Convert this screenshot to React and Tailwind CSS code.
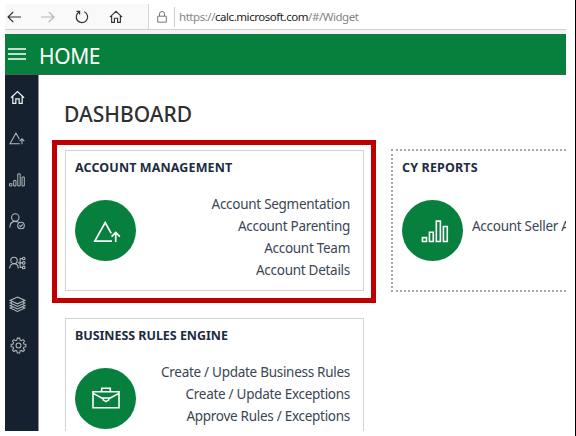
import React from "react";

const svgBase = { fill: "none", stroke: "currentColor", strokeLinejoin: "miter" };

function HomeIcon({ className }) {
  return (
    <svg viewBox="0 0 16 16" className={className} {...svgBase} strokeWidth="1.3">
      <path d="M1 8.2 8 1.6l7 6.6M3 6.8v7.4h3.2V9.4h3.6v4.8H13V6.8" />
    </svg>
  );
}

function TriangleIcon({ className, weight }) {
  return (
    <svg viewBox="0 0 28 22" className={className} {...svgBase} strokeWidth={weight}>
      <path d="M19 20.2H1.8L12.2 1.5l6 10.8M22.7 21v-9.2M18.6 15.6l4.1-4.1 4.1 4.1" />
    </svg>
  );
}

function BarsIcon({ className, weight }) {
  return (
    <svg viewBox="0 0 28 24" className={className} {...svgBase} strokeWidth={weight}>
      <path d="M.9 18.4h4.2v4H.9zM8.2 12.8h4v9.6h-4zM15.4 1.2h4.2v21.2h-4.2zM22.8 6.8h4v15.6h-4z" />
    </svg>
  );
}

function BriefcaseIcon({ className }) {
  return (
    <svg viewBox="0 0 28 22" className={className} {...svgBase} strokeWidth="1.6">
      <path d="M1 4.8h26v15.9H1zM9.7 4.8V1.2h8.6v3.6M1.2 6.4l10 5.4M26.8 6.4l-10 5.4M11.2 11h5.6v1.8L14 14.6l-2.8-1.8z" />
    </svg>
  );
}

function UserCheckIcon({ className }) {
  return (
    <svg viewBox="0 0 17 17" className={className} {...svgBase} strokeWidth="1.1">
      <circle cx="6.3" cy="4.5" r="3.7" />
      <path d="M.8 14.5c0-3.8 2.2-6.1 5.5-6.1 1.3 0 2.3.3 3.2.9" />
      <circle cx="12" cy="12.5" r="3.3" />
      <path d="m10.4 12.5 1.2 1.2 2.1-2.4" />
    </svg>
  );
}

function UserGroupIcon({ className }) {
  return (
    <svg viewBox="0 0 17 14" className={className} {...svgBase} strokeWidth="1.1">
      <circle cx="5" cy="4.4" r="3.2" />
      <path d="M.7 12.6C.7 9.5 2.4 7.6 5 7.6s4.3 1.9 4.3 5M9 6.9h3M11.1 2.6v8.8M11.1 2.6h2M11.1 11.4h2M12 6.9h1" />
      <circle cx="14.7" cy="2.5" r="1.3" />
      <circle cx="14.7" cy="6.9" r="1.3" />
      <circle cx="14.7" cy="11.4" r="1.3" />
    </svg>
  );
}

function LayersIcon({ className }) {
  return (
    <svg viewBox="0 0 17 16" className={className} {...svgBase} strokeWidth="1.1">
      <path d="m8.5 1 7.4 3.4-7.4 3.4-7.4-3.4zM3 6.1l-1.9.9 7.4 3.4L15.9 7 14 6.1M3 8.7l-1.9.9L8.5 13l7.4-3.4-1.9-.9M3 11.1l-1.9.9 7.4 3.4 7.4-3.4-1.9-.9" />
    </svg>
  );
}

function GearIcon({ className }) {
  return (
    <svg viewBox="0 0 18 18" className={className} {...svgBase} strokeWidth="1.1">
      <path d="M7.7 1.2h2.6l.4 2.1 1.3.6 1.9-1.2 1.5 1.5-1.2 1.9.5 1.3 2.1.4v2.5l-2.1.4-.5 1.3 1.2 1.9-1.5 1.5-1.9-1.2-1.3.6-.4 2.1H7.7l-.4-2.1-1.3-.6-1.9 1.2-1.5-1.5L3.8 12l-.5-1.3-2.1-.4V7.8l2.1-.4.5-1.3-1.2-1.9 1.5-1.5L6 3.9l1.3-.6z" />
      <circle cx="9" cy="9" r="2.6" />
    </svg>
  );
}

function BrowserBar() {
  return (
    <div className="flex h-[30px] shrink-0 flex-col bg-[#f2f2f2]">
      <div className="flex h-[26px] items-stretch border-b border-[#cfcfcf] bg-white text-[#333]">
        <div className="flex w-[143px] items-center bg-[#f9f9f9] pl-0.5">
          <svg viewBox="0 0 14 12" className="h-3 w-3.5" {...svgBase} strokeWidth="1.1">
            <path d="M14 6H1M6.2 1 1 6l5.2 5" />
          </svg>
          <svg viewBox="0 0 14 12" className="ml-5 h-3 w-3.5 text-[#b5b5b5]" {...svgBase} strokeWidth="1.1">
            <path d="M0 6h13M7.8 1 13 6l-5.2 5" />
          </svg>
          <svg viewBox="0 0 14 14" className="ml-5 h-3.5 w-3.5" {...svgBase} strokeWidth="1.2">
            <path d="M9.3 1.8A5.7 5.7 0 1 1 4.2 2M1.5 1.3h3.1v3.2" />
          </svg>
          <HomeIcon className="ml-5 h-3.5 w-3.5" />
        </div>
        <div className="flex flex-1 items-center border-l border-[#d5d5d5] bg-white pl-2">
          <svg viewBox="0 0 10 12" className="h-3 w-2.5 text-[#777]" {...svgBase} strokeWidth="1">
            <path d="M.7 5.2h8.6v6H.7zM2.5 5V3a2.5 2.5 0 0 1 5 0v2" />
          </svg>
          <div className="ml-[7px] h-5 w-px bg-[#cccccc]" />
          <p className="ml-1 text-[11.5px] leading-4 tracking-[-0.45px] whitespace-nowrap text-[#858585]">
            https://<span className="text-[#222]">calc.microsoft.com</span>/#/Widget
          </p>
        </div>
      </div>
    </div>
  );
}

function Sidebar() {
  return (
    <nav className="flex w-[34px] shrink-0 flex-col items-center border-r border-[#8d9297] bg-[#15212f] pt-[2px] pr-[9px] text-[#b4b8bc]">
      <div className="flex h-[41.3px] w-4 items-center justify-center text-[#f0f0f0]"><HomeIcon className="h-[15px] w-[15px] shrink-0" /></div>
      <div className="flex h-[41.3px] w-4 items-center justify-center"><TriangleIcon className="h-[13px] w-4 shrink-0" weight="1.8" /></div>
      <div className="flex h-[41.3px] w-4 items-center justify-center"><BarsIcon className="h-[14px] w-4 shrink-0" weight="1.7" /></div>
      <div className="flex h-[41.3px] w-4 items-center justify-center"><UserCheckIcon className="h-[17px] w-[17px] shrink-0" /></div>
      <div className="flex h-[41.3px] w-4 items-center justify-center"><UserGroupIcon className="h-[14px] w-[17px] shrink-0" /></div>
      <div className="flex h-[41.3px] w-4 items-center justify-center"><LayersIcon className="h-4 w-[17px] shrink-0" /></div>
      <div className="flex h-[41.3px] w-4 items-center justify-center pl-[3px]"><GearIcon className="h-[17px] w-[17px] shrink-0" /></div>
    </nav>
  );
}

function Disc({ children }) {
  return (
    <div className="flex h-[61px] w-[61px] shrink-0 items-center justify-center rounded-full bg-[#077f3d] text-white">
      {children}
    </div>
  );
}

function Links({ items }) {
  return (
    <ul className="flex-1 text-right text-[13.5px] leading-[22.1px] tracking-[-0.28px] whitespace-nowrap text-[#3a4654]">
      {items.map((item) => (
        <li key={item}>{item}</li>
      ))}
    </ul>
  );
}

export default function App() {
  return (
    <div className="flex h-[436px] w-[576px] justify-between overflow-hidden bg-white pt-1 pl-[5px] font-['Noto_Sans',sans-serif]">
      <div className="flex h-[427px] w-[561px] flex-col overflow-hidden">
        <BrowserBar />
        <header className="flex h-[41px] shrink-0 items-center border-b border-[#47604f] bg-[#077f3d] pl-[3px] text-white">
          <svg viewBox="0 0 18 12" className="h-3 w-[18px]" {...svgBase} strokeWidth="1.4">
            <path d="M0 1h18M0 6h18M0 11h18" />
          </svg>
          <span className="ml-[13px] pt-[3px] text-[21px] leading-7 tracking-[-0.4px]">HOME</span>
        </header>
        <div className="flex min-h-0 flex-1">
          <Sidebar />
          <main className="min-w-0 flex-1 overflow-hidden pt-6 pl-[26px]">
            <h1 className="-ml-px h-[51px] text-[21px] leading-[30px] font-medium text-[#303030]">DASHBOARD</h1>
            <div className="grid w-[626px] grid-cols-[299px_299px] items-start gap-x-[27px] gap-y-[26px]">
              <section className="relative h-[141px] border border-[#d2d2d2] px-[9px] pt-2">
                <h2 className="text-[12.5px] leading-[18px] font-bold tracking-[0.12px] whitespace-nowrap text-[#1d2c40]">ACCOUNT MANAGEMENT</h2>
                <div className="mt-[15px] flex">
                  <div className="pt-2"><Disc><TriangleIcon className="mt-0.5 ml-0.5 h-[22px] w-7" weight="1.7" /></Disc></div>
                  <div className="flex-1 pt-px pr-1">
                    <Links items={["Account Segmentation", "Account Parenting", "Account Team", "Account Details"]} />
                  </div>
                </div>
                <div className="absolute -top-[11px] -left-3.5 h-[163px] w-[324px] border-[5px] border-[#c00000]" />
              </section>
              <section className="-mt-px h-[143px] border-2 border-dotted border-[#a8a8a8] px-[9px] pt-2">
                <h2 className="text-[12.5px] leading-[18px] font-bold tracking-[0.15px] whitespace-nowrap text-[#1d2c40]">CY REPORTS</h2>
                <div className="mt-[15px] flex">
                  <div className="pt-2"><Disc><BarsIcon className="mt-0.5 ml-1 h-[23px] w-7" weight="1.7" /></Disc></div>
                  <p className="ml-[9px] pt-[23px] text-[13.5px] leading-[22px] tracking-[-0.28px] whitespace-nowrap text-[#3a4654]">Account Seller A</p>
                </div>
              </section>
              <section className="h-[141px] border border-[#d2d2d2] px-[9px] pt-2">
                <h2 className="text-[12.5px] leading-[18px] font-bold tracking-[-0.04px] whitespace-nowrap text-[#1d2c40]">BUSINESS RULES ENGINE</h2>
                <div className="mt-[15px] flex">
                  <div className="pt-2"><Disc><BriefcaseIcon className="mb-0.5 h-[22px] w-7" /></Disc></div>
                  <div className="flex-1 pt-px pr-1">
                    <Links items={["Create / Update Business Rules", "Create / Update Exceptions", "Approve Rules / Exceptions"]} />
                  </div>
                </div>
              </section>
            </div>
          </main>
        </div>
      </div>
      <div className="-mt-1 w-px bg-black" />
    </div>
  );
}
